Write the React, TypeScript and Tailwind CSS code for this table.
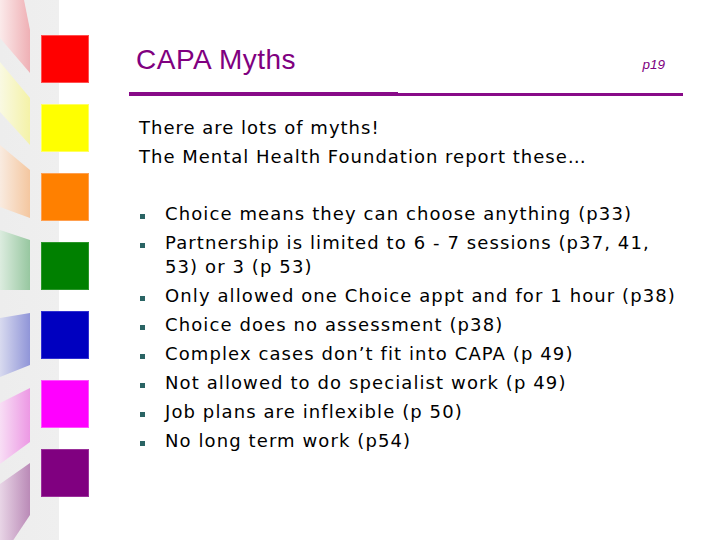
import React from "react";

const squares = [
  { bg: "bg-[#ff0000]", br: "border-[#ff5050]" },
  { bg: "bg-[#ffff00]", br: "border-[#ffff60]" },
  { bg: "bg-[#ff8000]", br: "border-[#ffa050]" },
  { bg: "bg-[#008000]", br: "border-[#2a962a]" },
  { bg: "bg-[#0000c0]", br: "border-[#3030d0]" },
  { bg: "bg-[#ff00ff]", br: "border-[#ff50ff]" },
  { bg: "bg-[#800080]", br: "border-[#9a309a]" },
];

const slats = [
  { pts: "0,0 24,0 30,30 30,73 0,38", a: "#fbeaea", b: "#efb0b5" },
  { pts: "0,62 30,98 30,145 0,112", a: "#f9f9e2", b: "#f4f2a8" },
  { pts: "0,145 30,170 30,218 0,207", a: "#f9ebe0", b: "#f4c7a0" },
  { pts: "0,230 30,240 30,290 0,290", a: "#dcecdf", b: "#97c7a0" },
  { pts: "0,318 30,313 30,365 0,377", a: "#d8daef", b: "#9095d8" },
  { pts: "0,403 30,388 30,442 0,464", a: "#f8def5", b: "#ec98e4" },
  { pts: "0,484 30,463 30,515 0,560", a: "#e8d5e6", b: "#ba8ab7" },
];

const items: React.ReactNode[] = [
  "Choice means they can choose anything (p33)",
  <>
    Partnership is limited to 6 - 7 sessions (p37, 41,
    <br />
    53) or 3 (p 53)
  </>,
  "Only allowed one Choice appt and for 1 hour (p38)",
  "Choice does no assessment (p38)",
  "Complex cases don\u2019t fit into CAPA (p 49)",
  "Not allowed to do specialist work (p 49)",
  "Job plans are inflexible (p 50)",
  "No long term work (p54)",
];

export default function App() {
  return (
    <div className="w-[720px] h-[540px] bg-white flex overflow-hidden">
      {/* left decorative strip */}
      <div className="relative w-[90px] shrink-0 h-full bg-[linear-gradient(to_right,#ededed_0,#efefef_59px,#ffffff_59px)]">
        <svg
          className="absolute left-0 top-0"
          width="30"
          height="540"
          viewBox="0 0 30 540"
        >
          <defs>
            {slats.map((s, i) => (
              <linearGradient key={i} id={`g${i}`} x1="0" y1="0" x2="1" y2="0">
                <stop offset="0" stopColor={s.a} />
                <stop offset="1" stopColor={s.b} />
              </linearGradient>
            ))}
          </defs>
          {slats.map((s, i) => (
            <polygon key={i} points={s.pts} fill={`url(#g${i})`} />
          ))}
        </svg>
        <div className="relative flex flex-col pl-[41px] pt-[35px] gap-[21px]">
          {squares.map((s, i) => (
            <div key={i} className={`w-[48px] h-[48px] border ${s.bg} ${s.br}`} />
          ))}
        </div>
      </div>

      {/* main content */}
      <div className="flex-1 flex flex-col">
        <div className="flex items-baseline justify-between pt-[44px] pl-[46px] pr-[55px]">
          <div className="text-[28px] leading-[32px] tracking-[0.5px] text-[#800080] font-['Liberation_Sans',Arial,sans-serif]">
            CAPA Myths
          </div>
          <div className="text-[13.5px] italic text-[#800080] font-['Liberation_Sans',Arial,sans-serif]">
            p19
          </div>
        </div>
        <div className="flex items-end mt-[16px] ml-[39px] mr-[37px]">
          <div className="w-[269px] h-[4px] bg-[#880a88]" />
          <div className="flex-1 h-[3px] bg-[#880a88]" />
        </div>
        <div className="mt-[17px] pl-[49px] text-[18px] leading-[29px] tracking-[1px] text-black font-['DejaVu_Sans',Verdana,sans-serif]">
          <div>There are lots of myths!</div>
          <div>The Mental Health Foundation report these…</div>
        </div>
        <ul className="mt-[31px] pl-[50px] flex flex-col gap-[5px] text-[18px] leading-[24px] tracking-[1.1px] text-black font-['DejaVu_Sans',Verdana,sans-serif]">
          {items.map((t, i) => (
            <li key={i} className="flex items-start">
              <span className="w-[25px] shrink-0 pt-[12px]">
                <span className="block w-[5px] h-[5px] bg-[#2a6464]" />
              </span>
              <span className="whitespace-nowrap">{t}</span>
            </li>
          ))}
        </ul>
      </div>
    </div>
  );
}
